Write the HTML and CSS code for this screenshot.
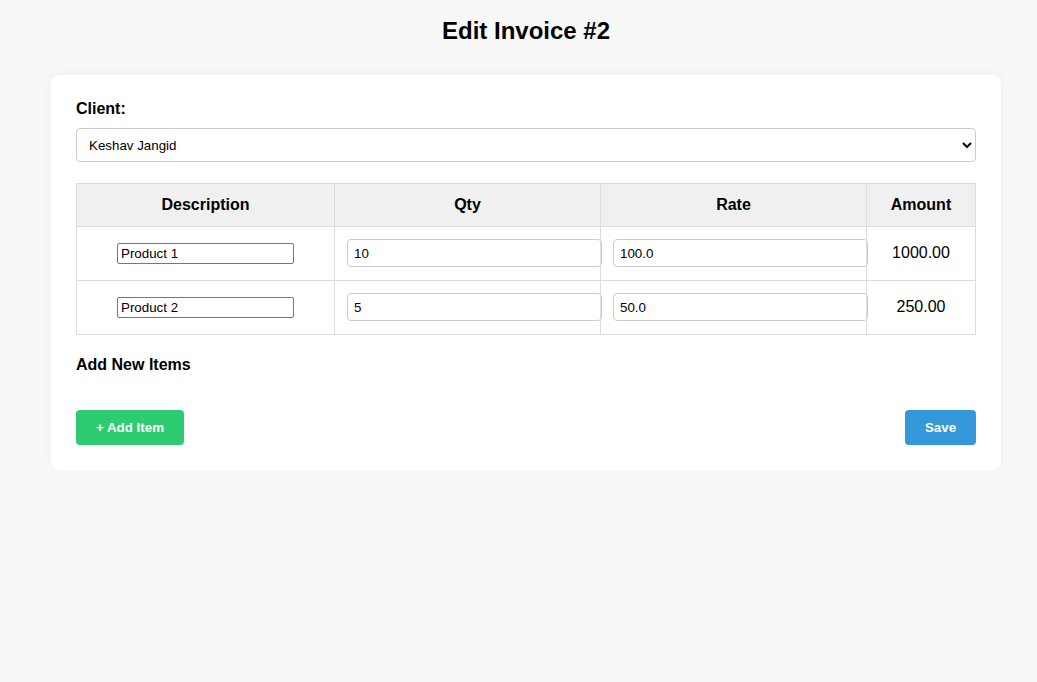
FILE: index.html
```html
<!DOCTYPE html>
<html>
<head>
<meta charset="utf-8">
<title>Edit Invoice #2</title>
<link rel="stylesheet" href="styles.css">
</head>
<body>
<h2 class="title">Edit Invoice #2</h2>
<div class="card">
  <label class="label">Client:</label>
  <select class="client-select">
    <option>Keshav Jangid</option>
  </select>
  <table class="items">
    <colgroup>
      <col class="c-desc"><col class="c-qty"><col class="c-rate"><col class="c-amt">
    </colgroup>
    <thead>
      <tr><th>Description</th><th>Qty</th><th>Rate</th><th>Amount</th></tr>
    </thead>
    <tbody>
      <tr>
        <td><input class="desc-input" type="text" value="Product 1"></td>
        <td><input class="num-input" type="text" value="10"></td>
        <td><input class="num-input" type="text" value="100.0"></td>
        <td class="amt">1000.00</td>
      </tr>
      <tr>
        <td><input class="desc-input" type="text" value="Product 2"></td>
        <td><input class="num-input" type="text" value="5"></td>
        <td><input class="num-input" type="text" value="50.0"></td>
        <td class="amt">250.00</td>
      </tr>
    </tbody>
  </table>
  <h3 class="subhead">Add New Items</h3>
  <div class="actions">
    <button class="btn btn-add" type="button">+ Add Item</button>
    <button class="btn btn-save" type="button">Save</button>
  </div>
</div>
</body>
</html>
```

FILE: styles.css
```css
html, body {
  margin: 0;
  padding: 0;
}
body {
  background: #f8f8f8;
  font-family: "Liberation Sans", Arial, sans-serif;
  color: #000;
  padding: 1px 36px 0 51px;
}
.title {
  width: 950px;
  text-align: center;
  font-size: 24px;
  font-weight: bold;
  margin: 16px 0 30px 0;
  line-height: 28px;
}
.card {
  width: 900px;
  background: #fff;
  border-radius: 8px;
  padding: 25px;
  box-shadow: 0 0 10px rgba(0, 0, 0, 0.05);
}
.label {
  display: block;
  font-weight: bold;
  font-size: 16px;
  line-height: 18px;
  margin-bottom: 10px;
}
.client-select {
  display: block;
  width: 100%;
  height: 34px;
  padding: 0 8px;
  border: 1px solid #ccc;
  border-radius: 4px;
  background: #fff;
  font-family: "Liberation Sans", Arial, sans-serif;
  font-size: 13.33px;
  color: #000;
  box-sizing: border-box;
}
.items {
  width: 100%;
  margin-top: 21px;
  border-collapse: collapse;
  table-layout: fixed;
}
.c-desc { width: 258px; }
.c-qty { width: 266px; }
.c-rate { width: 266px; }
.c-amt { width: 109px; }
.items th,
.items td {
  border: 1px solid #ddd;
  padding: 12px;
  text-align: center;
}
.items th {
  background: #f0f0f0;
  font-size: 16px;
  font-weight: bold;
  line-height: 18px;
}
.items td {
  font-size: 16px;
  padding-bottom: 13px;
}
.desc-input {
  font-family: "Liberation Sans", Arial, sans-serif;
  font-size: 13.33px;
  width: 177px;
  height: 21px;
  box-sizing: border-box;
  border: 1px solid #767676;
  border-radius: 2px;
  padding: 1px 3px;
  color: #000;
}
.num-input {
  display: block;
  width: 100%;
  padding: 6px;
  height: 14px;
  border: 1px solid #ccc;
  border-radius: 4px;
  font-family: "Liberation Sans", Arial, sans-serif;
  font-size: 13.33px;
  color: #000;
  margin: 0;
}
.amt {
  line-height: 18px;
}
.subhead {
  font-size: 16px;
  font-weight: bold;
  line-height: 18px;
  margin: 21px 0 36px 0;
}
.actions {
  display: flex;
  justify-content: space-between;
}
.btn {
  height: 35px;
  border: none;
  border-radius: 4px;
  color: #fff;
  font-family: "Liberation Sans", Arial, sans-serif;
  font-weight: bold;
  font-size: 13.33px;
  cursor: pointer;
}
.btn-add {
  background: #2ecc71;
  width: 108px;
  padding: 0;
}
.btn-save {
  background: #3498db;
  width: 71px;
  padding: 0;
}
```
